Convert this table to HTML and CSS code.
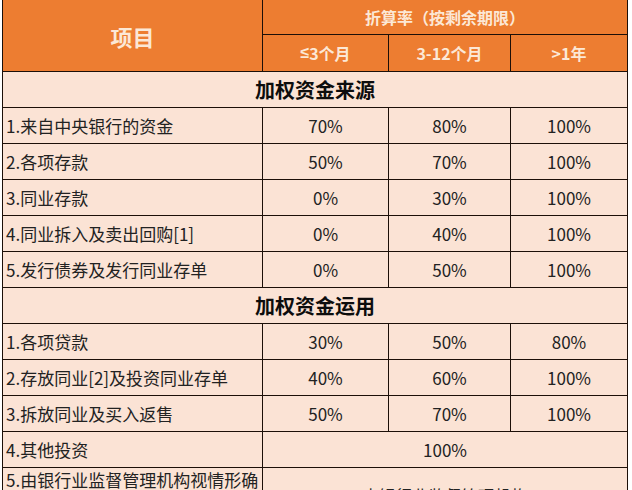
FILE: index.html
```html
<!DOCTYPE html>
<html lang="zh-CN">
<head>
<meta charset="utf-8">
<link rel="stylesheet" href="styles.css">
</head>
<body>
<div class="sheet">
  <div class="hd hd-item">项目</div>
  <div class="hd hd-rate">折算率（按剩余期限）</div>
  <div class="hd hd-sub"><span class="sym">≤</span>3个月</div>
  <div class="hd hd-sub">3-12个月</div>
  <div class="hd hd-sub">&gt;1年</div>

  <div class="sec">加权资金来源</div>
  <div class="c name">1.来自中央银行的资金</div><div class="c">70%</div><div class="c">80%</div><div class="c">100%</div>
  <div class="c name">2.各项存款</div><div class="c">50%</div><div class="c">70%</div><div class="c">100%</div>
  <div class="c name">3.同业存款</div><div class="c">0%</div><div class="c">30%</div><div class="c">100%</div>
  <div class="c name">4.同业拆入及卖出回购[1]</div><div class="c">0%</div><div class="c">40%</div><div class="c">100%</div>
  <div class="c name">5.发行债券及发行同业存单</div><div class="c">0%</div><div class="c">50%</div><div class="c">100%</div>

  <div class="sec">加权资金运用</div>
  <div class="c name">1.各项贷款</div><div class="c">30%</div><div class="c">50%</div><div class="c">80%</div>
  <div class="c name">2.存放同业[2]及投资同业存单</div><div class="c">40%</div><div class="c">60%</div><div class="c">100%</div>
  <div class="c name">3.拆放同业及买入返售</div><div class="c">50%</div><div class="c">70%</div><div class="c">100%</div>
  <div class="c name">4.其他投资</div><div class="c wide">100%</div>
  <div class="c name last">5.由银行业监督管理机构视情形确定的其他资产</div><div class="c wide last-val">由银行业监督管理机构<br>视情形确定</div>
</div>
</body>
</html>
```

FILE: styles.css
```css
html, body {
  margin: 0;
  padding: 0;
  background: #ffffff;
  overflow: hidden;
}

.sheet {
  display: inline-grid;
  margin-left: 2px;
  grid-template-columns: 259px 125px 121px 116px;
  grid-template-rows: 34px 36px repeat(11, 35px) 70px;
  gap: 1px;
  padding: 0 1px 1px 1px;
  background: #1c0f08;
  font-family: "Noto Sans CJK SC", "Noto Sans", sans-serif;
}

.hd {
  background: #ed7d31;
  color: #fce8d6;
  font-weight: 700;
  display: flex;
  align-items: center;
  justify-content: center;
}

.hd-item {
  grid-row: 1 / 3;
  grid-column: 1;
  font-size: 22px;
}

.hd-rate {
  grid-column: 2 / 5;
  font-size: 16px;
}

.hd-sub {
  font-size: 16px;
}

.sym {
  font-family: "Liberation Sans", "DejaVu Sans", sans-serif;
}

.sec {
  grid-column: 1 / 5;
  background: #fbe3d5;
  color: #0d0d0d;
  font-weight: 700;
  font-size: 20px;
  display: flex;
  align-items: center;
  justify-content: center;
}

.c {
  background: #fbe3d5;
  color: #222;
  font-size: 17px;
  display: flex;
  align-items: center;
  justify-content: center;
}

.c.name {
  justify-content: flex-start;
  padding-left: 3px;
}

.c.wide {
  grid-column: 2 / 5;
}

.c.last {
  align-items: flex-start;
  line-height: 24px;
}

.c.last-val {
  align-items: flex-start;
  text-align: center;
  line-height: 24px;
  padding-top: 16px;
  font-size: 16.5px;
}
```
